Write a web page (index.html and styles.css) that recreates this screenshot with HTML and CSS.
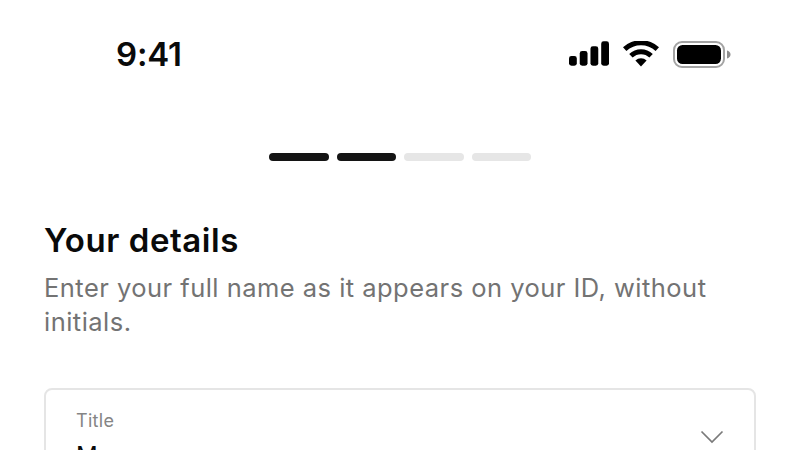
FILE: index.html
```html
<!DOCTYPE html>
<html lang="en">
<head>
    <meta charset="UTF-8">
    <meta name="viewport" content="width=device-width, initial-scale=1.0">
    <title>Your details</title>
    <link rel="stylesheet" href="styles.css">
</head>
<body>
    <div class="screen">
        <div class="status-bar">
            <span class="time">9:41</span>
            <div class="status-icons">
                <svg class="signal" width="40" height="26" viewBox="0 0 41 26">
                    <rect x="0" y="15" width="8" height="10" rx="2.5"/>
                    <rect x="11" y="10" width="8" height="15" rx="2.5"/>
                    <rect x="22" y="5" width="8" height="20" rx="2.5"/>
                    <rect x="33" y="0" width="8" height="25" rx="2.5"/>
                </svg>
                <svg class="wifi" width="36" height="26" viewBox="0 0 36 26">
                    <path d="M18 25.5l-5.6-6a8 8 0 0 1 11.2 0z"/>
                    <path d="M9.6 16.6l-3.4-3.7a17.2 17.2 0 0 1 23.6 0l-3.4 3.7a12.1 12.1 0 0 0-16.8 0z"/>
                    <path d="M3.4 10L0 6.3a26.4 26.4 0 0 1 36 0L32.6 10a21.4 21.4 0 0 0-29.2 0z"/>
                </svg>
                <svg class="battery" width="58" height="27" viewBox="0 0 58 27">
                    <rect x="1" y="1" width="50" height="25" rx="8" fill="#fff" stroke="#a3a3a3" stroke-width="2"/>
                    <rect x="4" y="4" width="44" height="19" rx="5.5" fill="#000"/>
                    <path d="M54 9.5c2 .6 3.5 2 3.5 4s-1.5 3.4-3.5 4z" fill="#8f8f8f"/>
                </svg>
            </div>
        </div>

        <div class="progress">
            <span class="step done"></span>
            <span class="step done"></span>
            <span class="step"></span>
            <span class="step"></span>
        </div>

        <div class="content">
            <h1>Your details</h1>
            <p class="intro">Enter your full name as it appears on your ID, without initials.</p>

            <div class="field">
                <div class="field-text">
                    <div class="field-label">Title</div>
                    <div class="field-value">Mr</div>
                </div>
                <svg class="chevron" width="24" height="14" viewBox="0 0 24 14">
                    <path d="M1.5 1.5L12 12 22.5 1.5" fill="none" stroke="#7a7a7a" stroke-width="1.7"/>
                </svg>
            </div>
        </div>
    </div>
</body>
</html>
```

FILE: styles.css
```css
html, body {
    margin: 0;
    height: 100%;
    overflow: hidden;
    background: white;
}
.screen {
    width: 800px;
    height: 450px;
    overflow: hidden;
    font-family: Inter, 'Noto Sans', sans-serif;
}
.status-bar {
    display: flex;
    justify-content: space-between;
    align-items: center;
    height: 36px;
    padding: 36px 69px 0 116px;
}
.time {
    font-size: 33px;
    font-weight: 600;
    letter-spacing: -0.2px;
    color: #0a0a0a;
}
.status-icons {
    display: flex;
    align-items: center;
    gap: 14px;
}
.progress {
    display: flex;
    justify-content: center;
    gap: 8px;
    margin-top: 81px;
    padding-left: 0.5px;
}
.step {
    width: 59.5px;
    height: 8px;
    border-radius: 4px;
    background: #e6e6e6;
}
.step.done {
    background: #141414;
}
.content {
    padding: 0 44px;
}
h1 {
    margin: 59px 0 0;
    font-size: 33px;
    line-height: 40px;
    font-weight: 600;
    letter-spacing: 0.55px;
    color: #0a0a0a;
}
.intro {
    margin: 10.5px 0 0;
    font-size: 25.5px;
    line-height: 34px;
    letter-spacing: 0.47px;
    color: #737373;
}
.field {
    display: flex;
    align-items: flex-start;
    justify-content: space-between;
    height: 92px;
    margin-top: 49.5px;
    padding: 0 30px;
    border: 2px solid #e5e5e5;
    border-radius: 8px;
}
.field-text {
    padding-top: 19px;
}
.field-label {
    font-size: 18px;
    line-height: 24px;
    letter-spacing: 0.3px;
    color: #858585;
}
.field-value {
    margin-top: 7px;
    font-size: 24px;
    line-height: 32px;
    color: #0a0a0a;
}
.chevron {
    margin-top: 40px;
}
```
